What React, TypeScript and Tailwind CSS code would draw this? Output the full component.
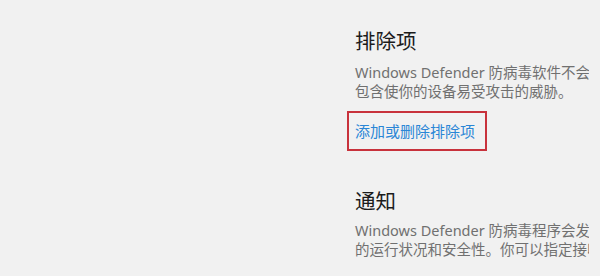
export default function App() {
  return (
    <div
      className="w-[600px] h-[276px] overflow-hidden bg-[#f1f1f1] pl-[347px] pt-[27px]"
      style={{ fontFamily: '"Noto Sans", "Noto Sans CJK SC", sans-serif' }}
    >
      <div className="w-[242px] overflow-hidden flex flex-col">
        <h2 className="ml-[8px] text-[20.5px] leading-[28px] text-[#1b1b1b] font-normal">排除项</h2>
        <div className="ml-[8px] mt-[8px] text-[14.5px] leading-[19px] text-[#707070] whitespace-nowrap">
          <div>Windows Defender 防病毒软件不会扫描已排除的项目。</div>
          <div>包含使你的设备易受攻击的威胁。</div>
        </div>
        <div className="mt-[10px] w-[140px] h-[40px] border-2 border-[#c8323c] flex items-center pl-[6px]">
          <span className="text-[15px] text-[#2a86d6] whitespace-nowrap">添加或删除排除项</span>
        </div>
        <h2 className="ml-[8px] mt-[36px] text-[20.5px] leading-[28px] text-[#1b1b1b] font-normal">通知</h2>
        <div className="ml-[8px] mt-[6px] text-[14.5px] leading-[19px] text-[#707070] whitespace-nowrap">
          <div>Windows Defender 防病毒程序会发送有关你设备的通知</div>
          <div>的运行状况和安全性。你可以指定接收哪些信息。</div>
        </div>
      </div>
    </div>
  );
}
